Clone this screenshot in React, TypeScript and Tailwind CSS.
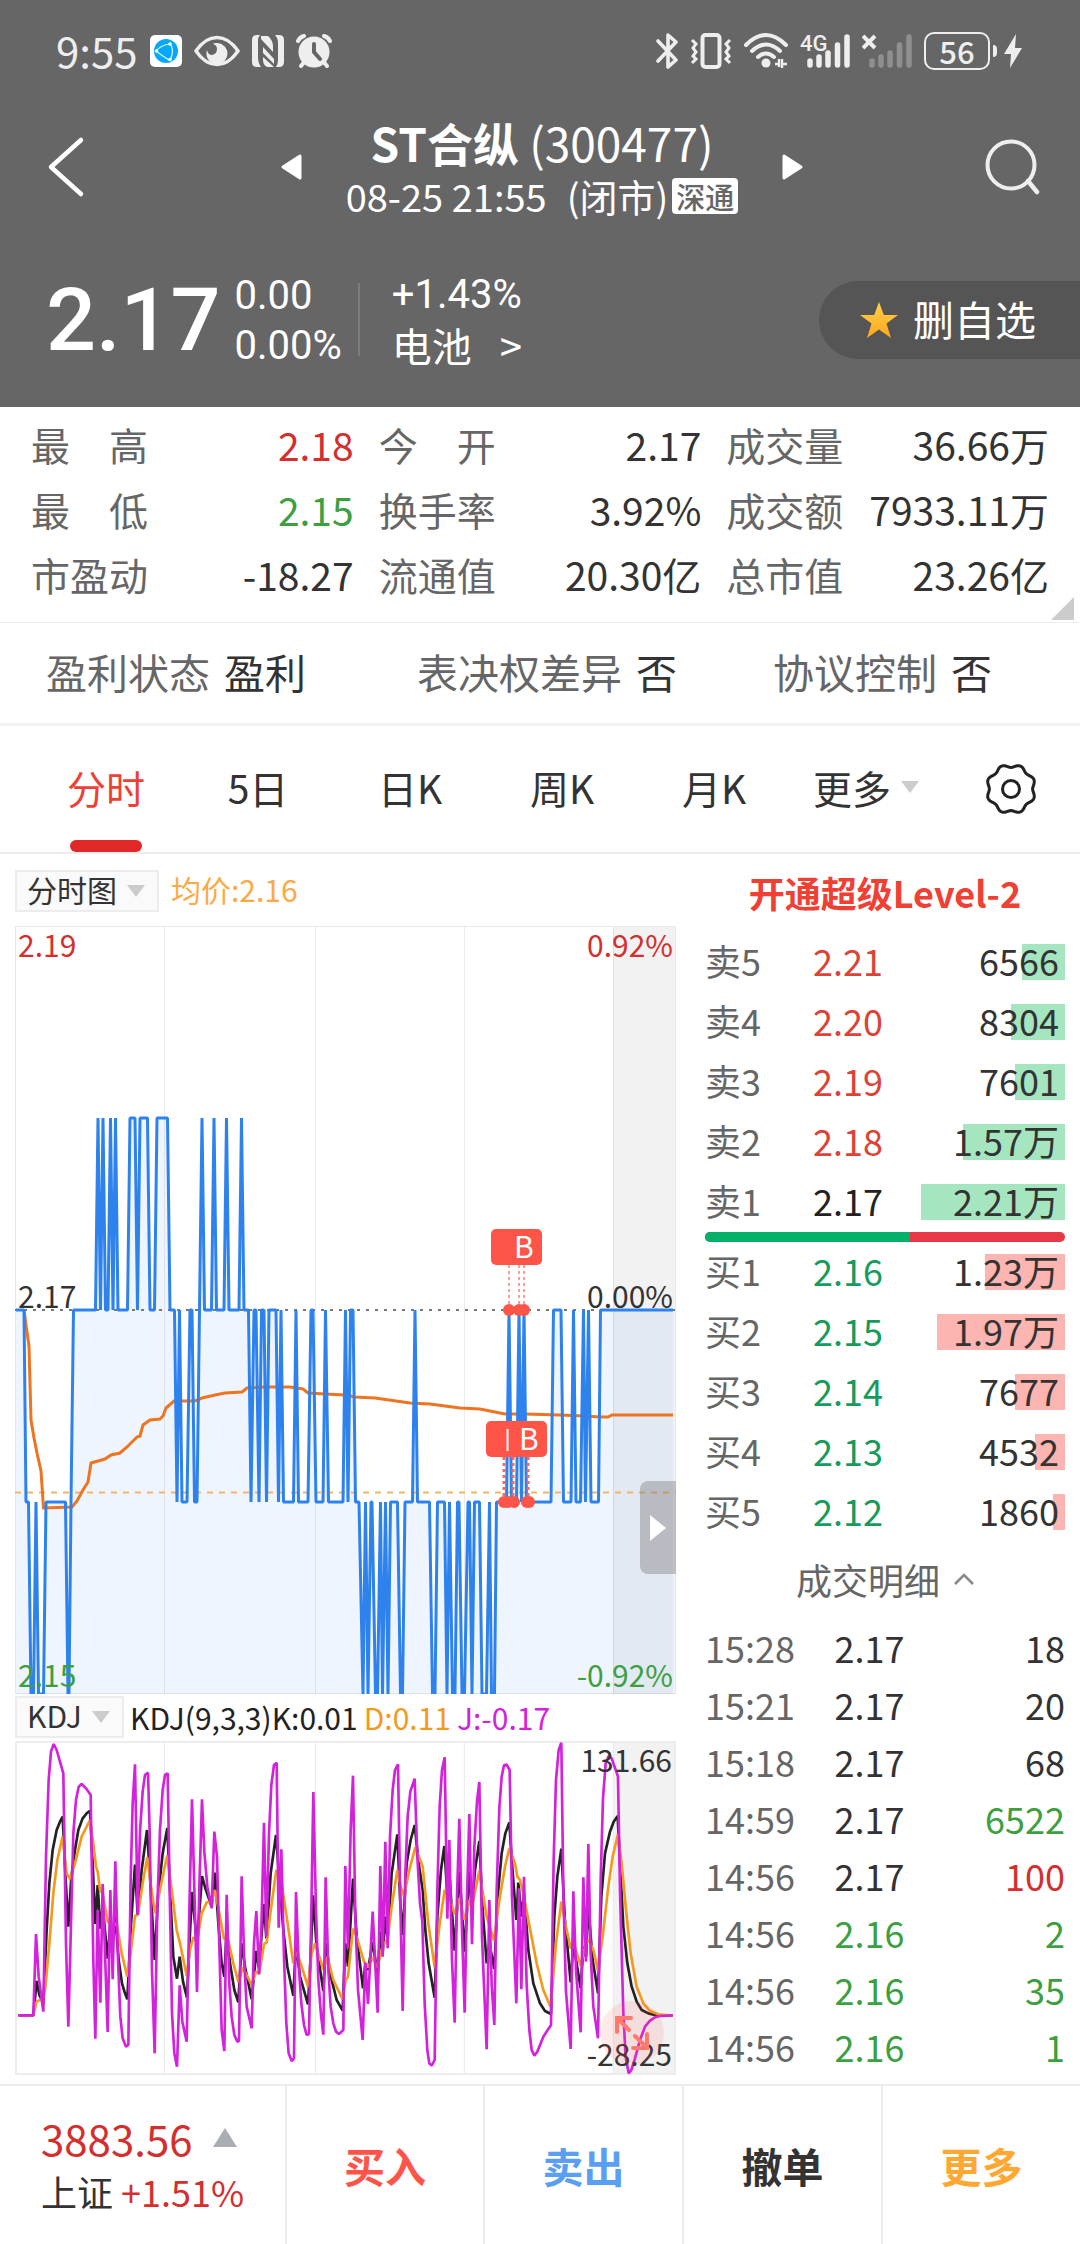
import { useState } from "react";

const FONT = "font-['Noto_Sans_CJK_SC',sans-serif]";

const stats = [
  { label: "最　高", value: "2.18", color: "text-[#d32f2f]" },
  { label: "今　开", value: "2.17", color: "text-[#333]" },
  { label: "成交量", value: "36.66万", color: "text-[#333]" },
  { label: "最　低", value: "2.15", color: "text-[#3c9f40]" },
  { label: "换手率", value: "3.92%", color: "text-[#333]" },
  { label: "成交额", value: "7933.11万", color: "text-[#333]" },
  { label: "市盈动", value: "-18.27", color: "text-[#333]" },
  { label: "流通值", value: "20.30亿", color: "text-[#333]" },
  { label: "总市值", value: "23.26亿", color: "text-[#333]" },
];

const flags = [
  { label: "盈利状态", value: "盈利" },
  { label: "表决权差异", value: "否" },
  { label: "协议控制", value: "否" },
];

const tabs = ["分时", "5日", "日K", "周K", "月K"];

interface Level {
  label: string;
  price: string;
  text: string;
  volume: number;
}

const asks: Level[] = [
  { label: "卖5", price: "2.21", text: "6566", volume: 6566 },
  { label: "卖4", price: "2.20", text: "8304", volume: 8304 },
  { label: "卖3", price: "2.19", text: "7601", volume: 7601 },
  { label: "卖2", price: "2.18", text: "1.57万", volume: 15700 },
  { label: "卖1", price: "2.17", text: "2.21万", volume: 22100 },
];

const bids: Level[] = [
  { label: "买1", price: "2.16", text: "1.23万", volume: 12300 },
  { label: "买2", price: "2.15", text: "1.97万", volume: 19700 },
  { label: "买3", price: "2.14", text: "7677", volume: 7677 },
  { label: "买4", price: "2.13", text: "4532", volume: 4532 },
  { label: "买5", price: "2.12", text: "1860", volume: 1860 },
];

const MAX_VOLUME = 22100;

const trades = [
  { time: "15:28", price: "2.17", volume: "18", color: "text-[#333]" },
  { time: "15:21", price: "2.17", volume: "20", color: "text-[#333]" },
  { time: "15:18", price: "2.17", volume: "68", color: "text-[#333]" },
  { time: "14:59", price: "2.17", volume: "6522", color: "text-[#3c9f40]" },
  { time: "14:56", price: "2.17", volume: "100", color: "text-[#d32f2f]" },
  { time: "14:56", price: "2.16", volume: "2", color: "text-[#3c9f40]" },
  { time: "14:56", price: "2.16", volume: "35", color: "text-[#3c9f40]" },
  { time: "14:56", price: "2.16", volume: "1", color: "text-[#3c9f40]" },
];

const actions = [
  { label: "买入", color: "text-[#ff5549]" },
  { label: "卖出", color: "text-[#5a9ff2]" },
  { label: "撤单", color: "text-[#333]" },
  { label: "更多", color: "text-[#ffa733]" },
];

// x followed by the price in cents above 2.00
const priceSteps =
  "16:17 24:17 26:16 28.5:16 31:15 33.5:15 36:16 38.5:15 43.5:15 46:16 65.5:16 68:15 69:15 71:16 73.5:17 95.5:17 98:18 100.5:17 103:18 105.5:17 108:17 110.5:18 113:17 115.5:18 118:17 127.5:17 130:18 135:18 137.5:17 140:18 147.5:18 150:17 154.5:17 157:18 167.5:18 170:17 174.5:17 177:16 179.5:17 182:16 187:16 190:17 192:17 194.5:16 197:16 199.5:17 202:18 204.5:17 211.5:17 214:18 216.5:17 224:17 226.5:18 229:17 239:17 241.5:18 244:17 248.5:17 251:16 254:17 256:17 259:16 261.5:17 264:17 266.5:16 269:17 276:17 278.5:16 281:17 283.5:16 293.5:16 296:17 298.5:16 308:16 311:17 313:17 316:16 323:16 325.5:17 328.5:16 343:16 345.5:17 348:16 350.5:17 353:17 355.5:16 359:16 363:15 365.5:16 368:15 371:16 372:16 375.5:15 377.5:15 380.5:16 382.5:15 385.5:16 388:15 390.5:16 397.5:16 400.5:15 402.5:15 405:16 412.5:16 415:17 417.5:16 429.5:16 432.5:15 435:15 437.5:16 444.5:16 447:15 449.5:16 452.5:15 455:15 457.5:16 459:16 462:15 464.5:15 468:16 469.5:16 472:15 474.5:16 479.5:16 482:15 486.5:15 489.5:16 491.5:15 494.5:15 496.5:16 506.5:16 509:17 511.5:16 516.5:16 519:17 521.5:16 524:17 526.5:16 551:16 553.5:17 561:17 563.5:16 571:16 573.5:17 576:16 580.5:16 583.5:17 585.5:16 588.5:17 591:16 598.5:16 600.5:17 673:17";

const pricePoints = priceSteps
  .split(" ")
  .map((s) => {
    const [x, cents] = s.split(":").map(Number);
    return `${x},${(19 - cents) * 192}`;
  })
  .join(" ");

const averagePoints =
  "24,384 26,399 29,420 31,494 34,512 37,527 41,545 43.5,582 72,581 77,575 83,564 88,556 91,537 105,533 111,529 120,527 127,521 137,511 140,510 143,499 150,494 160,493 163,490 166,482 174,475 195,475 202,472 215,469 225,467 242,466 247,462 265,461 290,461 303,463 308,467 325,468 345,469 355,471 375,472 410,477 430,478 460,482 480,483 495,486 505,488 525,488 560,489 585,490 600,491 608,491 612,489 673,489";

const jPoints =
  "55,856 100,856 108,612 116,740 130,845 138,380 146,150 153,65 161,42 170,60 190,130 198,640 205,890 220,310 228,210 236,170 245,162 258,175 272,195 280,690 286,926 293,540 301,818 308,462 323,906 331,480 338,748 346,394 354,690 361,860 368,925 378,950 385,945 392,450 398,220 405,103 413,555 420,305 428,185 435,135 444,128 449,305 456,720 464,970 472,530 480,300 488,180 495,135 503,130 509,480 516,850 523,970 531,1010 539,766 547,875 560,935 568,540 576,208 591,786 598,470 606,208 613,365 622,470 635,535 643,305 651,380 658,650 665,900 673,963 680,494 688,760 695,860 703,915 712,935 717,933 725,439 733,700 740,830 755,895 762,640 769,543 777,733 784,600 792,278 799,620 807,310 814,165 822,105 830,98 836,593 844,358 852,680 859,880 866,970 875,993 882,985 888,486 896,700 904,820 912,885 920,915 927,912 934,540 940,186 948,540 955,750 963,855 970,914 977,442 985,720 992,830 1000,880 1008,905 1017,912 1030,900 1036,408 1044,655 1052,300 1059,137 1066,560 1074,780 1088,930 1096,698 1104,822 1118,545 1133,848 1141,408 1148,680 1156,335 1163,655 1170,320 1178,180 1185,120 1194,103 1201,520 1208,843 1216,430 1223,260 1231,185 1244,146 1252,380 1260,520 1267,575 1274,820 1282,960 1288,1000 1295,1007 1304,990 1312,480 1319,230 1326,120 1334,82 1342,566 1348,330 1356,690 1364,878 1371,500 1378,266 1386,600 1394,848 1401,500 1408,252 1416,643 1423,350 1431,215 1438,156 1446,620 1460,958 1468,510 1475,765 1483,885 1490,480 1498,235 1505,140 1512,106 1520,104 1529,120 1536,500 1549,820 1557,475 1564,778 1572,440 1580,765 1588,900 1595,960 1603,977 1612,965 1630,920 1653,885 1661,390 1668,150 1676,60 1684,38 1690,480 1698,785 1712,957 1720,484 1728,720 1742,907 1750,442 1758,695 1765,342 1772,670 1780,830 1794,925 1802,450 1809,205 1817,100 1826,78 1835,85 1854,140 1860,480 1870,850 1877,980 1886,1030 1894,1020 1905,985 1920,930 1935,890 1950,872 1965,862 1980,858 2018,856";

const kPoints =
  "55,856 100,856 110,753 118,795 130,820 140,600 148,460 158,360 170,300 180,275 188,260 197,450 205,590 214,440 225,360 235,300 248,265 260,250 270,242 278,400 286,582 293,465 301,596 308,530 323,686 331,580 338,640 346,560 356,690 366,760 375,790 382,808 392,600 405,404 413,555 425,420 441,300 450,440 464,690 474,500 488,370 502,294 510,480 520,680 531,746 539,680 549,755 561,803 568,650 576,486 591,640 606,438 616,475 635,530 645,428 655,580 665,700 673,740 680,600 690,700 703,780 715,817 725,640 735,710 755,808 769,663 777,715 792,522 799,625 812,430 828,315 836,420 850,600 862,710 880,797 888,640 900,740 924,823 932,680 939,496 950,650 970,783 978,640 990,730 1010,810 1028,842 1036,640 1044,710 1059,446 1070,620 1089,775 1096,700 1104,720 1118,637 1133,735 1141,605 1148,670 1156,560 1163,630 1175,430 1192,313 1201,520 1208,615 1220,400 1232,330 1244,285 1256,400 1268,480 1276,600 1286,700 1304,803 1312,560 1323,420 1333,348 1342,500 1348,430 1364,662 1378,425 1394,665 1408,425 1416,540 1425,420 1438,333 1448,540 1460,700 1468,640 1483,717 1493,500 1505,370 1516,310 1528,277 1536,400 1549,570 1555,458 1564,560 1572,490 1585,660 1600,760 1620,820 1635,843 1653,852 1663,560 1672,440 1684,356 1694,560 1712,757 1720,640 1742,775 1750,650 1758,680 1765,530 1778,690 1794,790 1804,500 1815,370 1830,305 1841,275 1853,258 1860,400 1870,590 1882,700 1895,770 1910,815 1925,840 1945,850 1970,856 2018,857";

const dPoints =
  "55,856 100,856 110,815 130,805 136,775 148,640 160,490 172,390 188,320 200,430 210,447 225,400 245,320 270,270 280,340 288,410 293,425 300,480 308,490 323,575 338,590 350,580 365,670 382,740 392,670 405,558 414,553 428,460 442,382 452,460 465,550 478,490 490,430 502,376 515,480 530,600 540,640 560,737 570,660 580,622 592,630 605,550 620,517 635,515 645,480 658,550 672,628 682,620 700,700 716,758 728,712 740,735 755,765 768,725 778,730 792,642 800,638 815,520 829,420 843,450 860,560 880,700 890,665 905,710 924,770 935,670 945,640 958,680 970,718 982,680 1000,750 1028,808 1037,750 1044,740 1059,596 1070,620 1092,695 1104,712 1118,683 1132,712 1148,650 1163,625 1175,530 1192,420 1202,470 1212,498 1228,420 1246,352 1268,410 1285,580 1304,712 1318,590 1334,480 1348,500 1364,553 1378,505 1394,570 1408,510 1418,520 1438,422 1460,560 1482,632 1498,510 1515,410 1528,355 1545,400 1552,440 1560,450 1572,500 1585,570 1610,700 1630,780 1652,832 1668,640 1684,515 1698,590 1712,655 1724,650 1742,707 1755,650 1766,628 1780,660 1794,722 1808,620 1825,470 1838,380 1854,312 1865,400 1878,540 1892,670 1910,770 1930,820 1950,843 1975,853 2018,857";

function StatusBar() {
  return (
    <div className="flex h-[102px] items-center justify-between pr-[58px] pl-14 text-[#eee]">
      <div className="flex items-center gap-3">
        <span className="pb-0.5 text-[42px] leading-none">9:55</span>
        <svg className="h-8 w-8" viewBox="0 0 32 32">
          <rect width="32" height="32" rx="5" fill="#fff" />
          <circle cx="16" cy="16" r="12" fill="#03a9f8" />
          <path
            d="M6 16Q11 10 20 9M6 16Q11 20 19 25M20 8Q25 16 20 25"
            fill="none"
            stroke="#d8f2ff"
            strokeWidth="1.2"
          />
          <circle cx="6.5" cy="16" r="1.8" fill="#fff" />
          <circle cx="20" cy="9" r="1.8" fill="#fff" />
          <circle cx="20" cy="24.5" r="1.8" fill="#fff" />
        </svg>
        <svg className="h-8 w-[46px]" viewBox="0 0 46 32">
          <path
            d="M2 16C9 6 15 2.500 23 2.500S37 6 44 16C37 26 31 29.500 23 29.500S9 26 2 16Z"
            fill="none"
            stroke="#eee"
            strokeWidth="3.6"
            strokeLinejoin="round"
          />
          <path
            d="M22 8A10.500 10.500 0 1 1 13 15Q14 20 18 20Q23 19 23 14Q23 10 19 9Q20 8 22 8Z"
            fill="#eee"
          />
        </svg>
        <svg className="h-8 w-8" viewBox="0 0 32 32" fill="#eee">
          <path d="M8 0H5Q0 0 0 5V27Q0 32 5 32H9Q6 28 6 22V6Q6 2 8 0Z" />
          <path d="M23 0H27Q32 0 32 5V27Q32 32 27 32H24Q26 29 26 25V8Q26 3 23 0Z" />
          <path d="M9 1H16Q21 5 21 12V17L9 4Z" />
          <path d="M11 12L22 24V29L11 18Z" />
          <path d="M11 22L22 32H15Q11 30 11 25Z" />
        </svg>
        <svg className="h-[34px] w-9" viewBox="0 0 36 34">
          <path
            d="M2 7Q4 3 8 2M34 7Q32 3 28 2M9 27L5 32M27 27L31 32"
            stroke="#eee"
            strokeWidth="4"
            strokeLinecap="round"
            fill="none"
          />
          <circle cx="18" cy="18" r="15.5" fill="#eee" />
          <path
            d="M18 10V18L24 25"
            fill="none"
            stroke="#666"
            strokeWidth="4"
            strokeLinecap="round"
          />
        </svg>
      </div>

      <div className="flex items-center gap-3">
        <svg className="h-9 w-[22px]" viewBox="0 0 22 36">
          <path
            d="M2 8L20 27L12 34V2L20 9L2 28"
            fill="none"
            stroke="#eee"
            strokeWidth="3.6"
            strokeLinejoin="round"
            strokeLinecap="round"
          />
        </svg>
        <svg className="h-9 w-[42px]" viewBox="0 0 42 36">
          <rect
            x="12.5"
            y="2"
            width="17"
            height="32"
            rx="3"
            fill="none"
            stroke="#eee"
            strokeWidth="4"
          />
          <path
            d="M2 7L6 11L3 15L6 19L3 23L6 26L2 30M40 7L36 11L39 15L36 19L39 23L36 26L40 30"
            fill="none"
            stroke="#eee"
            strokeWidth="3"
          />
        </svg>
        <svg className="h-9 w-11" viewBox="0 0 44 36">
          <g fill="none" stroke="#eee" strokeWidth="4" strokeLinecap="round">
            <path d="M2 12Q22 -8 42 12" />
            <path d="M8 18Q22 5 36 18" />
            <path d="M14 24Q22 17 30 24" />
          </g>
          <circle cx="22" cy="30" r="4.5" fill="#eee" />
          <path
            d="M31 31H35V26M38 26V35M38 31H43M35 31V34"
            stroke="#eee"
            strokeWidth="2.4"
            fill="none"
          />
        </svg>
        <svg className="h-9 w-[50px]" viewBox="0 0 50 36">
          <text x="0" y="18" fontSize="22" fontWeight="500" fill="#eee" fontFamily="Roboto">
            4G
          </text>
          <g stroke="#eee" strokeWidth="5.5" strokeLinecap="round">
            <path d="M10 28V32M19 24V32M28 20V32M37.500 12V32M47 4V32" />
          </g>
        </svg>
        <svg className="h-9 w-[50px]" viewBox="0 0 50 36">
          <path d="M1 3L13 15M13 3L1 15" stroke="#eee" strokeWidth="4" />
          <g stroke="#8f8f8f" strokeWidth="5.5" strokeLinecap="round">
            <path d="M10 28V32M19 24V32M28 20V32M37.500 12V32M47 4V32" />
          </g>
        </svg>
        <div className="flex items-center gap-[3px]">
          <span className="flex h-[38px] w-[66px] items-center justify-center rounded-[10px] border-2 border-[#eee] pb-0.5 text-[31px] leading-none font-medium">
            56
          </span>
          <span className="h-3 w-1 rounded-r bg-[#eee]" />
          <svg className="ml-1 h-9 w-[18px]" viewBox="0 0 18 36">
            <path d="M12 1L0 21H7L6 35L18 15H11Z" fill="#eee" />
          </svg>
        </div>
      </div>
    </div>
  );
}

function TitleBar() {
  return (
    <div className="grid h-[130px] grid-cols-[1fr_auto_1fr] items-center pr-10 pl-11 text-white">
      <button aria-label="返回" className="justify-self-start">
        <svg className="h-[62px] w-[42px]" viewBox="0 0 42 62">
          <path
            d="M37 4L7 31L37 58"
            fill="none"
            stroke="#fff"
            strokeWidth="4.5"
            strokeLinecap="round"
            strokeLinejoin="round"
          />
        </svg>
      </button>
      <div className="flex items-center gap-11">
        <button aria-label="上一只">
          <svg className="h-7 w-[22px]" viewBox="0 0 22 28">
            <path
              d="M20 3V25L3 14Z"
              fill="#fff"
              stroke="#fff"
              strokeWidth="3"
              strokeLinejoin="round"
            />
          </svg>
        </button>
        <div className="flex flex-col items-center pt-1">
          <h1 className="text-[46px] leading-[54px] font-normal">
            <b>ST合纵</b> (300477)
          </h1>
          <p className="flex items-center text-[38px] leading-[54px]">
            <span>08-25 21:55</span>
            <span className="ml-5">(闭市)</span>
            <span className="ml-1 rounded bg-white px-1 text-[29px] leading-9 font-medium text-[#666]">
              深通
            </span>
          </p>
        </div>
        <button aria-label="下一只">
          <svg className="h-7 w-[22px]" viewBox="0 0 22 28">
            <path
              d="M2 3V25L19 14Z"
              fill="#fff"
              stroke="#fff"
              strokeWidth="3"
              strokeLinejoin="round"
            />
          </svg>
        </button>
      </div>
      <button aria-label="搜索" className="justify-self-end">
        <svg className="h-[58px] w-14" viewBox="0 0 56 58">
          <circle cx="27" cy="27" r="23.5" fill="none" stroke="#eee" strokeWidth="4" />
          <path d="M44 43L53 54" stroke="#eee" strokeWidth="4.5" strokeLinecap="round" />
        </svg>
      </button>
    </div>
  );
}

function PriceHeader() {
  return (
    <div className="flex h-[175px] items-center pl-[46px] text-white">
      <strong className="font-[Roboto] text-[88px] leading-none font-medium">2.17</strong>
      <div className="ml-3.5 flex flex-col pt-0.5 font-[Roboto] text-[40px] leading-[50px]">
        <span>0.00</span>
        <span>0.00%</span>
      </div>
      <span className="ml-4 h-[73px] w-0.5 bg-[#7d7d7d]" />
      <a href="#sector" className="ml-8 flex flex-col text-[40px] leading-[50px]">
        <span className="font-[Roboto]">+1.43%</span>
        <span className="flex gap-7">
          电池 <span>&gt;</span>
        </span>
      </a>
      <button className="ml-auto flex h-[78px] items-center gap-3.5 rounded-l-full bg-[#555] pr-11 pl-10 text-[41px] leading-none">
        <svg className="h-10 w-10" viewBox="0 0 40 40">
          <defs>
            <linearGradient id="star" x1="0" y1="0" x2="0" y2="1">
              <stop offset="0" stopColor="#ffd348" />
              <stop offset="1" stopColor="#ffa61f" />
            </linearGradient>
          </defs>
          <path
            d="M20 2L24.800 15H39L27.500 23.500L32 38L20 29.500L8 38L12.500 23.500L1 15H15.200Z"
            fill="url(#star)"
          />
        </svg>
        <span className="pb-0.5">删自选</span>
      </button>
    </div>
  );
}

function Stats() {
  return (
    <section className="relative border-b border-[#eee] pt-[5px] pb-[15px]">
      <dl className="grid grid-cols-3 gap-x-[25px] px-[31px] text-[39px] leading-[65px]">
        {stats.map((item) => (
          <div key={item.label} className="flex justify-between">
            <dt className="text-[#666]">{item.label}</dt>
            <dd className={item.color}>{item.value}</dd>
          </div>
        ))}
      </dl>
      <svg className="absolute right-1.5 bottom-0.5 h-[23px] w-[23px]" viewBox="0 0 23 23">
        <path d="M23 0V23H0Z" fill="#ccc" />
      </svg>
    </section>
  );
}

// closed outline with eight notches
const gearPath =
  Array.from({ length: 96 }, (_, i) => {
    const a = (i * Math.PI) / 48;
    const r = 23.2 - 1.6 * Math.cos(8 * a);
    const x = (26 + r * Math.cos(a)).toFixed(1);
    const y = (26 + r * Math.sin(a)).toFixed(1);
    return `${i ? "L" : "M"}${x} ${y}`;
  }).join("") + "Z";

function Tabs() {
  const [active, setActive] = useState("分时");

  return (
    <nav className="grid h-[128px] grid-cols-[152fr_152fr_152fr_152fr_152fr_152fr_138fr] border-b-2 border-[#ececec] pl-[30px] text-[39px] leading-none text-[#333]">
      {tabs.map((tab) => (
        <button
          key={tab}
          onClick={() => setActive(tab)}
          className={
            tab === active
              ? "relative flex items-center justify-center pb-1 text-[#ee4035]"
              : "relative flex items-center justify-center pb-1"
          }
        >
          {tab}
          {tab === active && (
            <span className="absolute bottom-0 h-3 w-[72px] rounded-full bg-[#e02828]" />
          )}
        </button>
      ))}
      <button className="flex items-center justify-center gap-2.5 pb-1">
        更多
        <Caret />
      </button>
      <button aria-label="设置" className="flex items-center justify-center">
        <svg className="h-[52px] w-[52px]" viewBox="0 0 52 52">
          <path d={gearPath} fill="none" stroke="#222" strokeWidth="3" />
          <circle cx="26" cy="26" r="8.5" fill="none" stroke="#222" strokeWidth="3" />
        </svg>
      </button>
    </nav>
  );
}

function Caret() {
  return (
    <svg className="h-3 w-[18px] shrink-0" viewBox="0 0 18 12">
      <path d="M0 0H18L9 12Z" fill="#ccc" />
    </svg>
  );
}

function Picker({ label, options }: { label: string; options: string[] }) {
  return (
    <span className="relative inline-flex items-center">
      <select
        aria-label={label}
        className="h-[42px] appearance-none border-2 border-[#ececec] bg-[#fafafa] pr-10 pb-1 pl-2.5 text-[30px] leading-[34px] text-[#333]"
      >
        {options.map((option) => (
          <option key={option}>{option}</option>
        ))}
      </select>
      <span className="pointer-events-none absolute right-3.5 flex">
        <Caret />
      </span>
    </span>
  );
}

function PriceChart() {
  return (
    <div className="relative">
      <svg
        className={`block w-full ${FONT}`}
        viewBox="15 0 661 768"
        role="img"
        aria-label="分时图"
      >
        <rect x="613" y="0" width="63" height="768" fill="#f2f2f2" />
        <polygon points={`16,768 ${pricePoints} 673,768`} fill="#2e82ff" fillOpacity="0.08" />
        <path
          d="M164.500 0V768M315.500 0V768M464.500 0V768M613.500 0V768M15 767.500H676"
          stroke="#000"
          strokeOpacity="0.08"
        />
        <path d="M15 .5H676M15.500 0V768M675.500 0V768" stroke="#e8e8e8" />
        <path d="M15 384H676" stroke="#777" strokeWidth="2" strokeDasharray="3 6" />
        <path d="M15 566.500H676" stroke="#f0b566" strokeWidth="2" strokeDasharray="6 6" />
        <polyline points={averagePoints} fill="none" stroke="#ee7420" strokeWidth="3" />
        <polyline
          points={pricePoints}
          fill="none"
          stroke="#2e82ee"
          strokeWidth="3"
          strokeLinejoin="bevel"
        />

        <g fontSize="30">
          <text x="18" y="31" fill="#d32f2f">2.19</text>
          <text x="18" y="382" fill="#333">2.17</text>
          <text x="18" y="761" fill="#3c9f40">2.15</text>
          <g textAnchor="end">
            <text x="673" y="31" fill="#d32f2f">0.92%</text>
            <text x="673" y="382" fill="#333">0.00%</text>
            <text x="673" y="761" fill="#3c9f40">-0.92%</text>
          </g>
        </g>

        <path
          d="M509 339V380M519 339V380M524 339V380"
          stroke="#f5a09a"
          strokeWidth="2"
          strokeDasharray="3 3"
        />
        <path
          d="M504 531V574M513 531V574M528 531V574"
          stroke="#ee6a6a"
          strokeWidth="3"
          strokeDasharray="3 3"
        />
        <g fill="#ff5549">
          <circle cx="509" cy="384" r="6" />
          <circle cx="519" cy="384" r="6" />
          <circle cx="524" cy="384" r="6" />
          <circle cx="504" cy="576" r="6" />
          <circle cx="508" cy="576" r="6" />
          <circle cx="514" cy="576" r="6" />
          <circle cx="527" cy="576" r="6" />
          <circle cx="529" cy="576" r="6" />
          <rect x="491" y="303" width="51" height="36" rx="5" />
          <rect x="486" y="495" width="61" height="36" rx="5" />
        </g>
        <path d="M507.500 503V525" stroke="#fff" strokeWidth="2" />
        <g fill="#fff" fontSize="30">
          <text x="514" y="332">B</text>
          <text x="519" y="524">B</text>
        </g>
      </svg>
      <button
        aria-label="展开"
        className="absolute right-0 bottom-[120px] flex h-[93px] w-9 items-center justify-center rounded-l-lg bg-[#777]/40"
      >
        <svg className="h-[26px] w-4" viewBox="0 0 16 26">
          <path d="M0 0L16 13L0 26Z" fill="#fff" />
        </svg>
      </button>
    </div>
  );
}

function KdjChart() {
  return (
    <div className="relative">
      <svg
        className={`block w-full ${FONT}`}
        viewBox="45 33 1983 1002"
        role="img"
        aria-label="KDJ"
      >
        <rect x="1839" y="33" width="189" height="1002" fill="#f2f2f2" />
        <path
          d="M493 33V1035M946 33V1035M1393 33V1035M1840 33V1035"
          stroke="#e8e8e8"
          strokeWidth="3"
        />
        <rect
          x="48"
          y="36"
          width="1977"
          height="996"
          fill="none"
          stroke="#ececec"
          strokeWidth="6"
        />
        <g fill="none" strokeWidth="8" strokeLinejoin="bevel">
          <polyline points={kPoints} stroke="#222" />
          <polyline points={dPoints} stroke="#f39a1e" />
          <polyline points={jPoints} stroke="#d422dc" />
        </g>
        <g fontSize="90" fill="#333" textAnchor="end">
          <text x="2016" y="126">131.66</text>
          <text x="2016" y="1008">-28.25</text>
        </g>
      </svg>
      <button
        aria-label="全屏"
        className="absolute right-3 bottom-2.5 flex h-16 w-16 items-center justify-center rounded-full bg-[#ff5549]/12"
      >
        <svg className="h-9 w-9" viewBox="0 0 36 36">
          <path
            d="M15 15L3 3M3 17V3H17M21 21L33 33M33 19V33H19"
            fill="none"
            stroke="#ff7a6c"
            strokeWidth="4"
            strokeLinecap="round"
          />
        </svg>
      </button>
    </div>
  );
}

interface DepthTableProps {
  levels: Level[];
  label: string;
  priceColor: string;
  barColor: string;
}

function DepthTable({ levels, label, priceColor, barColor }: DepthTableProps) {
  return (
    <table aria-label={label} className="w-full table-fixed text-left">
      <colgroup>
        <col className="w-[30%]" />
        <col className="w-[30%]" />
        <col className="w-[40%]" />
      </colgroup>
      <tbody>
        {levels.map((level) => (
          <tr key={level.label} className="h-[60px]">
            <th className="p-0 pb-1 font-normal text-[#666]">{level.label}</th>
            <td
              className={
                level.price === "2.17" ? "p-0 pb-1 text-[#222]" : `p-0 pb-1 ${priceColor}`
              }
            >
              {level.price}
            </td>
            <td className="p-0 text-[#333]">
              <div className="relative flex h-9 items-center justify-end">
                <span
                  className={`absolute inset-y-0 right-0 ${barColor}`}
                  style={{ width: `${(level.volume / MAX_VOLUME) * 100}%` }}
                />
                <span className="relative pr-1.5 pb-1">{level.text}</span>
              </div>
            </td>
          </tr>
        ))}
      </tbody>
    </table>
  );
}

function QuotePanel() {
  return (
    <aside className="text-[36px] leading-none">
      <a
        href="#level2"
        className="flex h-[78px] items-center justify-center pb-0.5 font-bold text-[#f04033]"
      >
        开通超级Level-2
      </a>
      <DepthTable
        levels={asks}
        label="卖盘"
        priceColor="text-[#dd4237]"
        barColor="bg-[#a5e6c0]"
      />
      <div className="flex h-[10px] overflow-hidden rounded-full bg-[#e83848]">
        <span className="w-[57%] bg-[#05b068]" />
      </div>
      <DepthTable
        levels={bids}
        label="买盘"
        priceColor="text-[#179b5c]"
        barColor="bg-[#fdb5b1]"
      />
      <button className="flex h-[78px] w-full items-center justify-center gap-3.5 pb-1 text-[#666]">
        成交明细
        <svg className="h-3 w-5" viewBox="0 0 20 12">
          <path d="M1 11L10 2L19 11" fill="none" stroke="#888" strokeWidth="2.5" />
        </svg>
      </button>
      <table aria-label="成交明细" className="w-full table-fixed text-left">
        <colgroup>
          <col className="w-[36%]" />
          <col className="w-[32%]" />
          <col className="w-[32%]" />
        </colgroup>
        <tbody>
          {trades.map((trade, i) => (
            <tr key={i} className="h-[57px]">
              <td className="p-0 pb-1 text-[#666]">{trade.time}</td>
              <td
                className={
                  trade.price === "2.16" ? "p-0 pb-1 text-[#3c9f40]" : "p-0 pb-1 text-[#333]"
                }
              >
                {trade.price}
              </td>
              <td className={`p-0 pb-1 text-right ${trade.color}`}>{trade.volume}</td>
            </tr>
          ))}
        </tbody>
      </table>
    </aside>
  );
}

function BottomBar() {
  return (
    <footer className="grid h-[161px] grid-cols-[287fr_198fr_199fr_199fr_197fr] divide-x-2 divide-[#ececec] border-t-2 border-[#ececec]">
      <a href="#index" className="flex flex-col justify-center pb-1 pl-[41px] text-[#d32f2f]">
        <span className="flex items-center gap-5 text-[42px] leading-[54px]">
          3883.56
          <svg className="h-[19px] w-6" viewBox="0 0 24 19">
            <path d="M12 0L24 19H0Z" fill="#aaadb3" />
          </svg>
        </span>
        <span className="text-[36px] leading-[52px]">
          <span className="text-[#333]">上证</span> +1.51%
        </span>
      </a>
      {actions.map((action) => (
        <button key={action.label} className={`text-[41px] font-bold ${action.color}`}>
          {action.label}
        </button>
      ))}
    </footer>
  );
}

export default function App() {
  return (
    <div className={`min-h-screen bg-white ${FONT}`}>
      <header className="bg-[#666]">
        <StatusBar />
        <TitleBar />
        <PriceHeader />
      </header>
      <Stats />
      <section className="grid h-[103px] grid-cols-[371fr_356fr_307fr] items-center border-b-[3px] border-[#f2f2f2] pb-1 pl-[46px] text-[41px] leading-none">
        {flags.map((flag) => (
          <p key={flag.label} className="flex gap-3.5 text-[#666]">
            {flag.label} <span className="text-[#333]">{flag.value}</span>
          </p>
        ))}
      </section>
      <Tabs />
      <main className="grid grid-cols-[661fr_360fr] gap-x-[29px] px-[15px]">
        <div>
          <div className="flex items-center gap-3 pt-4 pb-3.5 text-[30px] leading-none">
            <Picker label="图表类型" options={["分时图", "分时量"]} />
            <span className="pb-1 text-[#fbaa45]">均价:2.16</span>
          </div>
          <PriceChart />
          <div className="flex items-center gap-1.5 pt-0.5 pb-[3px] text-[30px] leading-none whitespace-nowrap">
            <Picker label="指标" options={["KDJ", "RSI"]} />
            <span className="text-[#222]">KDJ(9,3,3)K:0.01</span>
            <span className="text-[#f39a1e]">D:0.11</span>
            <span className="text-[#d422dc]">J:-0.17</span>
          </div>
          <KdjChart />
        </div>
        <QuotePanel />
      </main>
      <div className="h-2" />
      <BottomBar />
    </div>
  );
}
